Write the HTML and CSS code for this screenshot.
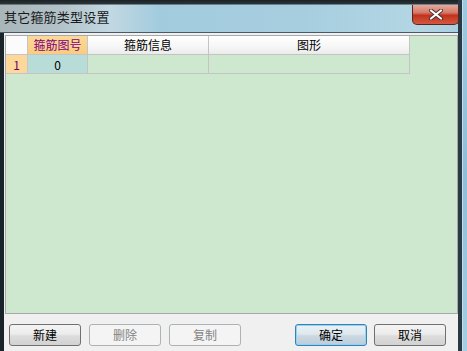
FILE: index.html
```html
<!DOCTYPE html>
<html>
<head>
<meta charset="utf-8">
<link rel="stylesheet" href="styles.css">
</head>
<body>
<div class="window">
  <div class="titlebar">
    <span class="title">其它箍筋类型设置</span>
    <button class="close" aria-label="关闭">
      <svg width="16" height="11" viewBox="0 0 16 11"><path d="M3 1.5 L13 9.5 M13 1.5 L3 9.5" stroke="#4a3030" stroke-width="4" stroke-linecap="round"/><path d="M3 1.5 L13 9.5 M13 1.5 L3 9.5" stroke="#ffffff" stroke-width="2.2" stroke-linecap="round"/></svg>
    </button>
  </div>
  <div class="client">
    <div class="grid">
      <div class="hd corner"></div>
      <div class="hd sel">箍筋图号</div>
      <div class="hd">箍筋信息</div>
      <div class="hd">图形</div>
      <div class="blank"></div>
      <div class="rowhd">1</div>
      <div class="cell cur">0</div>
      <div class="cell"></div>
      <div class="cell"></div>
      <div class="blank"></div>
    </div>
    <div class="footer">
      <div class="group">
        <button class="btn">新建</button>
        <button class="btn" disabled>删除</button>
        <button class="btn" disabled>复制</button>
      </div>
      <div class="group right">
        <button class="btn focus">确定</button>
        <button class="btn">取消</button>
      </div>
    </div>
  </div>
</div>
</body>
</html>
```

FILE: styles.css
```css
html, body {
  margin: 0;
  padding: 0;
}
body {
  width: 467px;
  height: 351px;
  overflow: hidden;
  background: linear-gradient(#9ccbe0, #8ebfd8 50%, #a4cfe4);
  font-family: "Noto Sans CJK SC", "Noto Sans", sans-serif;
}
.window {
  width: 458px;
  height: 351px;
  display: flex;
  flex-direction: column;
  background: linear-gradient(90deg, #18242a 0, #18242a 4px, transparent 4px);
  border-right: 4px solid #2a3a44;
  box-shadow: 1px 0 0 #c8dde8;
}
.titlebar {
  height: 32px;
  display: flex;
  align-items: flex-start;
  padding-left: 4px;
  background:
    linear-gradient(#1c2226 0, #2a3438 4px, transparent 5px),
    linear-gradient(90deg, #a8b6ba 0, #b2c2c8 60px, #c2d8e2 110px, #a2cbde 160px, #a6cedf 300px, #b4d6e4 420px, #a8cfe0 100%);
  border-bottom: 1px solid #4a5a64;
}
.title {
  margin-top: 9px;
  font-size: 13px;
  line-height: 16px;
  color: #1a1a1a;
  letter-spacing: 0.2px;
}
.close {
  margin-left: auto;
  margin-top: 5px;
  margin-right: -1px;
  width: 47px;
  height: 20px;
  border: 1px solid #5a2420;
  border-top: none;
  border-radius: 0 0 5px 5px;
  background: linear-gradient(#e8a89c 0, #d47a6a 40%, #c2321c 55%, #d25a40 100%);
  display: flex;
  align-items: center;
  justify-content: center;
  padding: 0;
}
.client {
  flex: 1;
  margin-left: 4px;
  background: #f0f0f0;
  padding: 2px 0 0 1px;
  display: flex;
  flex-direction: column;
}
.grid {
  box-sizing: border-box;
  height: 279px;
  border: 1px solid #a8a8a8;
  background: #cde8cf;
  display: grid;
  grid-template-columns: 22px 60px 121px 201px 1fr;
  grid-template-rows: 19px 19px 1fr;
  align-content: start;
  font-size: 12px;
  color: #000;
}
.hd {
  background: linear-gradient(#ffffff, #f6f6f6 60%, #ebebeb);
  border-right: 1px solid #c4c4c4;
  border-bottom: 1px solid #c4c4c4;
  display: flex;
  align-items: center;
  justify-content: center;
  line-height: 16px;
}
.hd.corner {
  background: #fbfbfb;
}
.hd.sel {
  background: linear-gradient(#fbd999, #f8cc80);
  color: #800080;
}
.blank {
  background: #cde8cf;
}
.rowhd {
  background: #fcd99a;
  border-right: 1px solid #c4c4c4;
  border-bottom: 1px solid #c4c4c4;
  color: #700060;
  display: flex;
  align-items: center;
  justify-content: center;
}
.cell {
  border-right: 1px solid #c4c4c4;
  border-bottom: 1px solid #c4c4c4;
  display: flex;
  align-items: center;
  justify-content: center;
}
.cell.cur {
  background: #b8ddd8;
}
.footer {
  display: flex;
  justify-content: space-between;
  padding: 10px 12px 0 4px;
}
.group {
  display: flex;
  gap: 8px;
}
.group.right {
  gap: 7px;
}
.btn {
  width: 72px;
  height: 22px;
  border: 1px solid #707070;
  border-radius: 3px;
  background: linear-gradient(#f4f4f4 0, #ececec 45%, #dcdcdc 55%, #d2d2d2 100%);
  font-family: "Noto Sans CJK SC", "Noto Sans", sans-serif;
  font-size: 12px;
  color: #000;
  padding: 0;
  line-height: 18px;
}
.btn:disabled {
  border-color: #adb2b5;
  background: #f4f4f4;
  color: #838383;
}
.btn.focus {
  border-color: #3c7fb1;
  box-shadow: inset 0 0 0 1px #8ed4f8;
  background: linear-gradient(#eaf2f6 0, #dfe8ee 45%, #cad8e2 55%, #bccddb 100%);
}
```
